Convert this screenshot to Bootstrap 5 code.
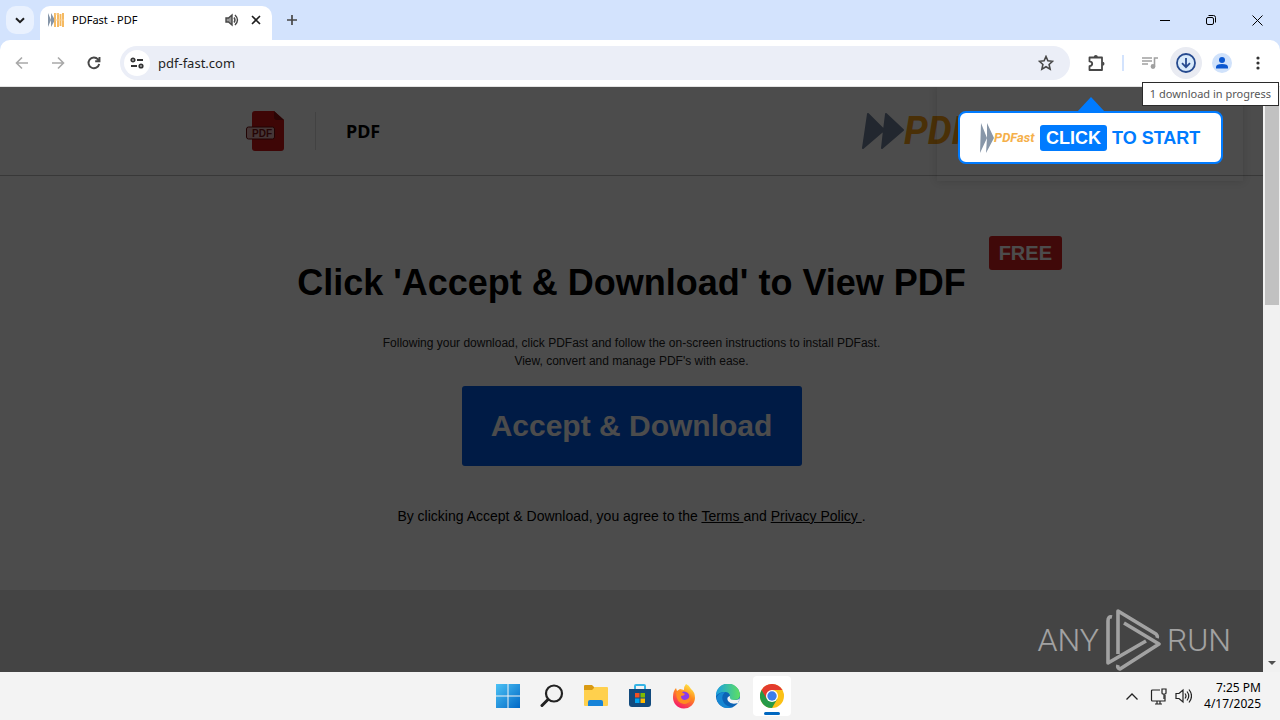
<!DOCTYPE html>
<html lang="en">
<head>
<meta charset="utf-8">
<meta name="viewport" content="width=device-width, initial-scale=1">
<title>PDFast - PDF</title>
<link href="https://cdn.jsdelivr.net/npm/bootstrap@5.3.0/dist/css/bootstrap.min.css" rel="stylesheet">
<style>
  body { font-family: "Liberation Sans", Arial, sans-serif; background: #fff; color: #000; }
  button { border: 0; background: none; padding: 0; color: inherit; }
  .ui-font { font-family: "Noto Sans", sans-serif; font-size: 12px; line-height: 16px; }
  .ui-font-sm { font-family: "Noto Sans", sans-serif; font-size: 11px; line-height: 16px; }
  svg { display: block; flex: none; }

  /* window frame */
  .tab-strip { height: 40px; background: #d3e3fd; padding-left: 6px; gap: 6px; }
  .tab-search { width: 28px; height: 28px; border-radius: 10px; background: #e9f1fe; }
  .browser-tab { width: 232px; height: 34px; background: #fff; border-radius: 10px 10px 0 0; padding-bottom: 6px; }
  .new-tab { width: 28px; height: 28px; display: flex; align-items: center; justify-content: center; }
  .icon-btn { width: 36px; height: 36px; display: flex; align-items: center; justify-content: center; border-radius: 50%; flex: none; }
  .win-btn { width: 46px; height: 40px; display: flex; align-items: center; justify-content: center; }
  .toolbar-wrap { background: #d3e3fd; }
  .toolbar { height: 47px; background: #fff; border-radius: 10px 10px 0 0; border-bottom: 1px solid #e3e3e3; }
  .omnibox { height: 34px; border-radius: 17px; background: #ebeef7; }
  .site-info { width: 26px; height: 26px; border-radius: 50%; background: #fff; }
  .omnibox input { border: 0; background: none; outline: 0; min-width: 0; font-family: "Noto Sans", sans-serif; font-size: 13px; line-height: 20px; padding: 0; color: #1f1f1f; }
  .tool-split { width: 2px; height: 16px; background: #d3e3fd; }
  .downloads { background: #e9ebf2; width: 32px; height: 32px; margin: 0 2px; }
  .tip { top: 82px; right: 1px; z-index: 5; background: #fff; border: 1px solid #2b2b2b; padding: 3px 7px; color: #575757; white-space: nowrap; }

  /* page */
  .viewport { overflow: hidden; }
  .dim { inset: 0; background: rgba(0, 0, 0, .7); pointer-events: none; }
  .page-head { height: 89px; border-bottom: 1px solid #bbb; padding-left: 245px; padding-right: 240px; }
  .head-split { width: 1px; height: 38px; background: #dedede; margin: 0 30px; }
  .head-title { font: bold 18px/24px "Noto Sans", sans-serif; }
  .logo-word { font-family: Roboto, sans-serif; font-weight: 700; font-style: italic; color: #f7a11a; white-space: nowrap; }
  .logo-lg { width: 161px; }
  .logo-lg .logo-word { font-size: 38px; line-height: 44px; }
  .logo-sm { width: 60px; }
  .logo-sm .logo-word { font-size: 13px; line-height: 30px; color: #f5b04a; }
  .free-tag { background: #d8201f; color: #fff; font-weight: 700; font-size: 20px; line-height: 34px; padding: 0 10px; border-radius: 3px; top: 60px; right: 201px; }
  h1 { font-size: 36px; line-height: 44px; font-weight: 700; padding-top: 85px; }
  .lead-in { font-size: 12px; line-height: 18px; color: #222; margin-top: 29px; }
  .accept { width: 340px; height: 80px; background: #005ae6; color: #fff; font-weight: 700; font-size: 30px; border-radius: 3px; margin-top: 16px; padding-bottom: 2px; }
  .legal { font-size: 14px; line-height: 20px; margin-top: 40px; }
  .legal a { color: inherit; white-space: pre; }
  .page-foot { background: #e3e3e3; }
  .scroller { width: 17px; background: #f1f1f1; padding: 17px 1px 0 2px; }
  .scroll-thumb { height: 201px; background: #c1c1c1; }

  /* prompt over the page */
  .hint-zone { top: 0; right: 20px; width: 306px; height: 94px; box-shadow: 0 0 8px rgba(0, 0, 0, .15); }
  .hint { top: 24px; right: 40px; width: 265px; height: 53px; background: #fff; border: 2px solid #007bff; border-radius: 8px; padding-left: 20px; color: #007bff; font-weight: 700; font-size: 18px; line-height: 26px; }
  .hint-arrow { top: 10px; right: 158px; }
  .hint-key { background: #007bff; color: #fff; border-radius: 3px; padding: 0 6px; margin-right: 5px; }
  .watermark { right: 32px; bottom: 0; height: 64px; color: #fff; opacity: .5; gap: 6px; font: 300 32px/64px Roboto, sans-serif; }

  /* taskbar */
  .taskbar { height: 48px; background: #f3f3f3; }
  .task-apps { gap: 6px; }
  .task-side { flex: 1 1 0; }
  .tray { gap: 8px; padding-right: 19px; }
  .tray-gap { margin-right: 4px; }
  .task-btn { width: 38px; height: 40px; display: flex; align-items: center; justify-content: center; border-radius: 4px; }
  .task-btn.running { background: #fff; }
  .run-mark { width: 16px; height: 3px; border-radius: 2px; background: #0067c0; bottom: 1px; left: 11px; }
</style>
</head>
<body class="d-flex flex-column min-vh-100 position-relative">

<header>
  <div class="tab-strip d-flex align-items-center">
    <button class="tab-search d-flex align-items-center justify-content-center" aria-label="Search tabs">
      <svg width="10" height="7" viewBox="0 0 10 7" fill="none" stroke="#1f1f1f" stroke-width="2"><path d="M1 1.200l4 4 4-4"/></svg>
    </button>
    <div class="browser-tab d-flex align-items-center align-self-end ps-2 pe-2 ui-font-sm">
      <svg class="me-2" width="16" height="16" viewBox="0 0 16 16"><path d="M0 1l3 7-3 7zM3 1l4 7-4 7z" fill="#8595a8"/><path d="M7 1v14M10 1v14M12.500 2v12M15 1v14" stroke="#f5b75c" stroke-width="1.900"/><path d="M7 2h4M7 8h9" stroke="#f8cf93"/></svg>
      <span class="flex-grow-1">PDFast - PDF</span>
      <button class="me-2" aria-label="Mute tab"><svg width="16" height="16" viewBox="0 0 16 16" fill="none" stroke="#474747" stroke-width="1.400"><path d="M2 6h2.500L8 3v10l-3.500-3H2z" fill="#999"/><path d="M10 5.500q2 2.500 0 5M11 3q5 5 0 10"/></svg></button>
      <button aria-label="Close tab"><svg width="16" height="16" viewBox="0 0 16 16" stroke="#1f1f1f" stroke-width="1.600"><path d="M4 4l8 8M12 4l-8 8"/></svg></button>
    </div>
    <button class="new-tab" aria-label="New tab"><svg width="12" height="12" viewBox="0 0 12 12" stroke="#474747" stroke-width="1.700"><path d="M6 1v10M1 6h10"/></svg></button>
    <div class="ms-auto d-flex">
      <button class="win-btn" aria-label="Minimize"><svg width="10" height="10" viewBox="0 0 10 10" stroke="#000"><path d="M0 5.500h10"/></svg></button>
      <button class="win-btn" aria-label="Restore"><svg width="10" height="10" viewBox="0 0 10 10" fill="none" stroke="#000"><rect x=".5" y="2.500" width="7" height="7" rx="1.500"/><path d="M2.500 .5h5q2 0 2 2v5"/></svg></button>
      <button class="win-btn" aria-label="Close"><svg width="11" height="11" viewBox="0 0 11 11" stroke="#000"><path d="M.5 .5l10 10M10.500 .5l-10 10"/></svg></button>
    </div>
  </div>
  <div class="toolbar-wrap">
    <div class="toolbar d-flex align-items-center ps-1 pe-1">
      <button class="icon-btn" aria-label="Back"><svg width="14" height="14" viewBox="0 0 14 14" fill="none" stroke="#a9a9a9" stroke-width="1.600"><path d="M13 7H2M7 1.500L1.500 7 7 12.500"/></svg></button>
      <button class="icon-btn" aria-label="Forward"><svg width="14" height="14" viewBox="0 0 14 14" fill="none" stroke="#a9a9a9" stroke-width="1.600"><path d="M1 7h11M7 1.500L12.500 7 7 12.500"/></svg></button>
      <button class="icon-btn" aria-label="Reload"><svg width="14" height="14" viewBox="0 0 14 14" fill="none" stroke="#474747" stroke-width="1.900"><path d="M12.200 8A5.400 5.400 0 1 1 11 3.300l1.200 1.500M12.500 1v4.300H8.200"/></svg></button>
      <div class="omnibox d-flex align-items-center flex-grow-1 ms-2 me-2 ps-1">
        <button class="site-info d-flex align-items-center justify-content-center me-2" aria-label="Site information"><svg width="14" height="12" viewBox="0 0 14 12" fill="none" stroke="#333" stroke-width="1.800"><circle cx="3" cy="3" r="1.700"/><path d="M7 3h6M1 9h6"/><circle cx="11" cy="9" r="1.700"/></svg></button>
        <input class="flex-grow-1" type="text" value="pdf-fast.com" aria-label="Address">
        <button class="me-3" aria-label="Bookmark"><svg width="16" height="16" viewBox="0 0 16 16" fill="none" stroke="#474747" stroke-width="1.600"><path d="M8 1.500l1.900 4.300 4.700.5-3.500 3.200 1 4.600L8 11.700l-4.100 2.400 1-4.600L1.400 6.300l4.700-.5z"/></svg></button>
      </div>
      <button class="icon-btn" aria-label="Extensions"><svg width="18" height="18" viewBox="0 0 18 18"><path d="M2.500 3.500h12.500v12.500H2.500v-3.800q2.700-.4 2.700-2.400t-2.700-2.400z" fill="none" stroke="#474747" stroke-width="1.800" stroke-linejoin="round"/><path d="M6.800 3a2 2 0 0 1 4 0zM15.500 7.800a2 2 0 0 1 0 4z" fill="#474747"/></svg></button>
      <span class="tool-split ms-2 me-2"></span>
      <button class="icon-btn" aria-label="Media"><svg width="16" height="14" viewBox="0 0 16 14" fill="none" stroke="#a0a0a0" stroke-width="1.600"><path d="M0 2h10M0 5h10M0 8h6M12.500 10.500V2H16"/><circle cx="11" cy="10.500" r="1.600" fill="#a0a0a0"/></svg></button>
      <button class="icon-btn downloads" aria-label="Downloads"><svg width="20" height="20" viewBox="0 0 20 20" fill="none" stroke="#264a8f" stroke-width="1.800"><circle cx="10" cy="10" r="9" fill="#d8eafb"/><path d="M10 5v9M6 10.200l4 4 4-4"/></svg></button>
      <button class="icon-btn" aria-label="Profile"><svg width="20" height="20" viewBox="0 0 20 20"><circle cx="10" cy="10" r="10" fill="#d0e2fb"/><circle cx="10" cy="7" r="3" fill="#0b57d0"/><path d="M4 15.500v-1.500q0-3 6-3t6 3v1.500z" fill="#0b57d0"/></svg></button>
      <button class="icon-btn" aria-label="Menu"><svg width="4" height="16" viewBox="0 0 4 16" fill="#333"><circle cx="2" cy="3" r="1.600"/><circle cx="2" cy="8" r="1.600"/><circle cx="2" cy="13" r="1.600"/></svg></button>
    </div>
  </div>
</header>

<div class="tip ui-font-sm position-absolute" role="tooltip">1 download in progress</div>

<div class="viewport d-flex flex-grow-1">
  <main class="position-relative flex-grow-1 d-flex flex-column">
    <div class="page-head d-flex align-items-center">
      <svg width="40" height="42" viewBox="0 0 40 42"><path d="M10 1h19l10 9v28q0 3-3 3H10q-3 0-3-3V4q0-3 3-3z" fill="#cf1515"/><path d="M29 1l10 9h-7q-3 0-3-3z" fill="#8c0f0f"/><rect x="1.500" y="17" width="28" height="12" rx="2" fill="#e6b4b4" stroke="#6e0d0d"/><text x="7" y="27" font-family="Liberation Sans" font-weight="700" font-size="10" fill="#7d1212">PDF</text></svg>
      <span class="head-split"></span>
      <span class="head-title">PDF</span>
      <div class="logo-lg ms-auto d-flex align-items-center">
        <svg width="42" height="36" viewBox="0 0 42 36" fill="#74849e" stroke="#74849e" stroke-width="2" stroke-linejoin="round"><path d="M6 1l16 16L1 35zM24 1l17 16-21 18 2-18z"/></svg>
        <span class="logo-word">PDF</span>
      </div>
    </div>
    <section class="position-relative text-center pb-5">
      <span class="free-tag position-absolute">FREE</span>
      <h1 class="mb-0">Click 'Accept &amp; Download' to View PDF</h1>
      <p class="lead-in mb-0">Following your download, click PDFast and follow the on-screen instructions to install PDFast.<br>View, convert and manage PDF's with ease.</p>
      <button class="accept">Accept &amp; Download</button>
      <p class="legal mb-3">By clicking Accept &amp; Download, you agree to the <a href="#">Terms </a>and <a href="#">Privacy Policy </a>.</p>
    </section>
    <footer class="page-foot flex-grow-1"></footer>
    <div class="dim position-absolute"></div>
    <div class="hint-zone position-absolute"></div>
    <svg class="hint-arrow position-absolute" width="28" height="15" viewBox="0 0 28 15"><path d="M14 0l14 15H0z" fill="#007bff"/></svg>
    <div class="hint position-absolute d-flex align-items-center">
      <div class="logo-sm d-flex align-items-center">
        <svg width="14" height="30" viewBox="0 0 14 30" fill="#8796a8"><path d="M1 0l6 15-7 15zM7 0l7 15-8 15 1-15z"/></svg>
        <span class="logo-word">PDFast</span>
      </div>
      <span class="hint-key">CLICK</span><span>TO START</span>
    </div>
    <div class="watermark position-absolute d-flex align-items-center">
      <span>ANY</span>
      <svg width="56" height="62" viewBox="0 0 56 62" fill="none" stroke="#fff" stroke-width="3.600" stroke-linejoin="round"><path d="M7 8q-4-1-4 4v42L41 32M13 45V2l38 23q2 2 1 4M19 14l35 21-39 25q-3-1-2-4"/></svg>
      <span>RUN</span>
    </div>
  </main>
  <div class="scroller d-flex flex-column">
    <div class="scroll-thumb"></div>
    <svg class="mt-auto mb-1 align-self-center" width="8" height="9" viewBox="0 0 8 9"><path d="M0 2h8L4 6z" fill="#505050"/></svg>
  </div>
</div>

<footer class="taskbar d-flex align-items-center">
  <div class="task-side"></div>
  <nav class="task-apps d-flex" aria-label="Taskbar">
    <button class="task-btn" aria-label="Start"><svg width="24" height="24" viewBox="0 0 24 24"><defs><linearGradient id="win" x2="1" y2="1"><stop stop-color="#4cc2f5"/><stop offset="1" stop-color="#0067c5"/></linearGradient></defs><path d="M0 0h11.500v11.500H0zM12.500 0H24v11.500H12.500zM0 12.500h11.500V24H0zM12.500 12.500H24V24H12.500z" fill="url(#win)"/></svg></button>
    <button class="task-btn" aria-label="Search"><svg width="24" height="24" viewBox="0 0 24 24" fill="none" stroke="#222" stroke-width="2.200"><circle cx="14" cy="9.500" r="8"/><path d="M8 15.500l-6 6" stroke-width="3" stroke-linecap="round"/></svg></button>
    <button class="task-btn" aria-label="File Explorer"><svg width="26" height="24" viewBox="0 0 26 24"><path d="M1 2q0-1 1-1h7l3 3-3 3H1z" fill="#d99a12"/><path d="M1 6h8l3-3h12q1 0 1 1v17q0 1-1 1H2q-1 0-1-1z" fill="#ffd04d"/><path d="M5 22v-4q0-2 2-2h11q2 0 2 2v4z" fill="#1683d8"/></svg></button>
    <button class="task-btn" aria-label="Microsoft Store"><svg width="24" height="26" viewBox="0 0 24 26"><path d="M7 7V3q0-1 1-1h8q1 0 1 1v4" fill="none" stroke="#36b4e5" stroke-width="2"/><path d="M1 6h22v15q0 3-3 3H4q-3 0-3-3z" fill="#124a7d"/><path d="M7 10h4.500v4.500H7z" fill="#f25022"/><path d="M12.500 10H17v4.500h-4.500z" fill="#7fba00"/><path d="M7 15.500h4.500V20H7z" fill="#00a4ef"/><path d="M12.500 15.500H17V20h-4.500z" fill="#ffb900"/></svg></button>
    <button class="task-btn" aria-label="Firefox"><svg width="24" height="26" viewBox="0 0 24 26"><defs><linearGradient id="fox" x1=".8" x2=".3" y2="1"><stop stop-color="#fff04a"/><stop offset=".45" stop-color="#ff8a1e"/><stop offset="1" stop-color="#f5156c"/></linearGradient></defs><path d="M14 1q3 1 5 5 4 3 4 9a11 11 0 0 1-22-1q0-6 3-9l1 3 3-2 4 1q0-4 2-6z" fill="url(#fox)"/><circle cx="12" cy="14" r="5.500" fill="#8a3bea"/><path d="M4 9q4-3 7 1l2 1q-1 2-4 2 0 4 4 4 5-1 5-6 3 9-6 10-8-1-8-12z" fill="#ff8b20"/></svg></button>
    <button class="task-btn" aria-label="Edge"><svg width="24" height="24" viewBox="0 0 24 24"><defs><linearGradient id="edgeTop" x2="1"><stop stop-color="#1ba0e2"/><stop offset="1" stop-color="#5ee061"/></linearGradient></defs><circle cx="12" cy="12" r="12" fill="#0c63b5"/><path d="M0 12a12 12 0 0 1 24-1q0 5-6 5-5 0-4-3 0-5-5-5-6 0-9 4z" fill="url(#edgeTop)"/><path d="M9 8q-5 5-1 11 3 4 9 4-9 3-14-3-5-6 0-10 2-2 6-2z" fill="#1687d3"/><path d="M14 12q-4 1-2 5 3 4 10 2l2-5q-1 2-6 2t-4-4z" fill="#f3f3f3"/></svg></button>
    <button class="task-btn running position-relative" aria-label="Chrome"><svg width="24" height="24" viewBox="0 0 24 24"><circle cx="12" cy="12" r="12" fill="#fbc116"/><path d="M12 12L1.600 6A12 12 0 0 0 12 24l5.200-9z" fill="#269a48"/><path d="M1.600 6A12 12 0 0 1 22.400 6H12l-5.200 9z" fill="#e33b2e"/><circle cx="12" cy="12" r="6" fill="#fff"/><circle cx="12" cy="12" r="4.700" fill="#3b7ded"/></svg><span class="run-mark position-absolute"></span></button>
  </nav>
  <div class="task-side">
    <div class="tray d-flex justify-content-end align-items-center ui-font">
      <button class="tray-gap" aria-label="Hidden icons"><svg width="12" height="7" viewBox="0 0 12 7" fill="none" stroke="#222" stroke-width="1.300"><path d="M.5 6.500L6 1l5.500 5.500"/></svg></button>
      <button aria-label="Network"><svg width="17" height="17" viewBox="0 0 17 17" fill="none" stroke="#222" stroke-width="1.200"><path d="M10 2H2.500q-1 0-1 1v9q0 1 1 1H15V7M5 16h7M7 13v3M10 13v3"/><path d="M12 1h4v4q0 1-1 1h-2q-1 0-1-1z M14 6v5"/></svg></button>
      <button class="tray-gap" aria-label="Volume"><svg width="17" height="16" viewBox="0 0 17 16" fill="none" stroke="#222" stroke-width="1.200"><path d="M1 5.500h3L8 2v12l-4-3.500H1zM10 5.500q2 2.500 0 5M12 3.500q3.500 4.500 0 9M14 1.500q5 6.500 0 13"/></svg></button>
      <div class="text-end">7:25 PM<br>4/17/2025</div>
    </div>
  </div>
</footer>

<script src="https://cdn.jsdelivr.net/npm/bootstrap@5.3.0/dist/js/bootstrap.bundle.min.js"></script>
</body>
</html>
